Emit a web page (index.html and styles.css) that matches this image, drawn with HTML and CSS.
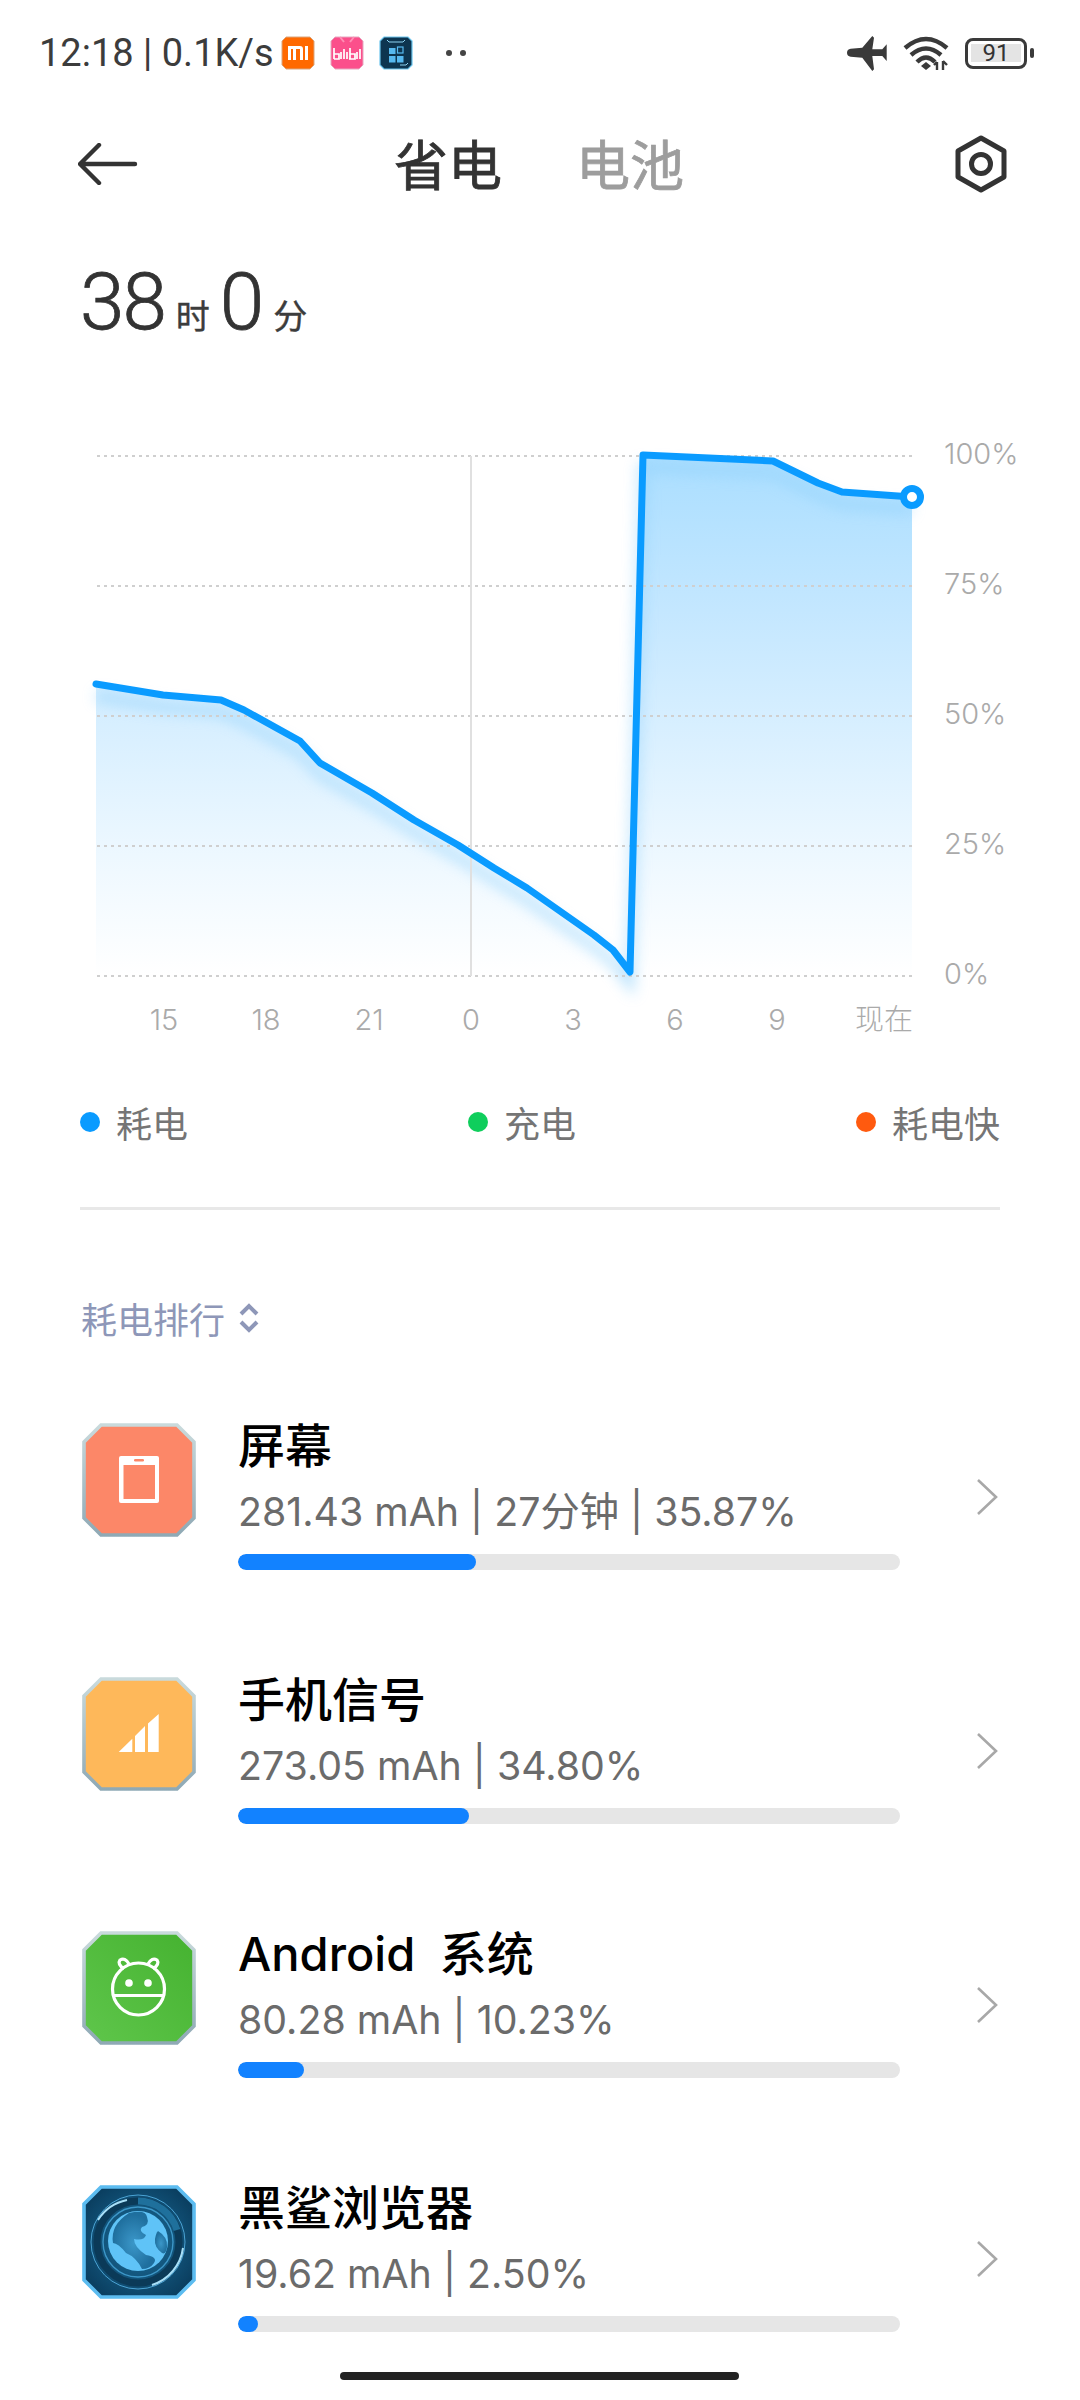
FILE: index.html
```html
<!DOCTYPE html>
<html lang="zh-CN">
<head>
    <meta charset="UTF-8">
    <meta name="viewport" content="width=device-width, initial-scale=1.0">
    <title>省电</title>
    <link rel="stylesheet" href="styles.css">
</head>
<body>
    <div class="screen">
        <div class="status-bar">
            <span class="status-text">12:18 | 0.1K/s</span>
            <svg class="note-icon" width="34" height="34" viewBox="0 0 34 34">
                <path d="M5 1H29L33 5V29L29 33H5L1 29V5Z" fill="#ff6900" stroke="#d9a67e" stroke-width="1"/>
                <path d="M7 10H19Q22 10 22 13V24H19V13H15V24H12V13H10V24H7ZM24 10H27V24H24Z" fill="#fff"/>
            </svg>
            <svg class="note-icon" width="34" height="34" viewBox="0 0 34 34">
                <path d="M5 1H29L33 5V29L29 33H5L1 29V5Z" fill="#fb4f8b" stroke="#e6a8c0" stroke-width="1"/>
                <path d="M10 1L14 6M24 1L20 6" stroke="#ff8db4" stroke-width="2"/>
                <path d="M4 12V23M4 23H9V18H4M11 16V23M14 13V23M17 16V23M19 23H25V18H20M20 12V23M27 16V23M30 13V23" stroke="#fff" stroke-width="1.7" fill="none"/>
            </svg>
            <svg class="note-icon" width="34" height="34" viewBox="0 0 34 34">
                <path d="M5 1H29L33 5V29L29 33H5L1 29V5Z" fill="#0d3550" stroke="#6cc6ee" stroke-width="1.2"/>
                <path d="M8 4L10 6H24L26 4M21 29H27L29 27" stroke="#8ed4f2" stroke-width="1" fill="none"/>
                <rect x="10" y="12" width="6.5" height="6" fill="#56b9f0"/>
                <rect x="18.5" y="11" width="5.5" height="6" fill="none" stroke="#56b9f0" stroke-width="1.2"/>
                <rect x="10" y="20" width="6.5" height="6.5" fill="#56b9f0"/>
                <rect x="18" y="20" width="6.5" height="6.5" fill="#56b9f0"/>
            </svg>
            <span class="status-dots"><i></i><i></i></span>
            <span class="status-spacer"></span>
            <svg class="plane" width="40" height="35" viewBox="0 0 40 35">
                <path d="M15.3 11.7L25.3 0L27 1.7L25.3 13.3H35.3L39.7 8.3V25L35.3 20H25.3L27 33.3L25.3 35L15.3 21.7L3.7 20.7Q0 20 0 16.7Q0 13.4 3.7 12.7Z" fill="#3a3a3a"/>
            </svg>
            <svg class="wifi" width="46" height="36" viewBox="0 0 46 36">
                <path d="M2 13Q23 -5 44 13" stroke="#3a3a3a" stroke-width="4.4" fill="none"/>
                <path d="M8 20Q23 7 38 20" stroke="#3a3a3a" stroke-width="4.4" fill="none"/>
                <path d="M14 27Q23 18 32 27" stroke="#3a3a3a" stroke-width="4.4" fill="none"/>
                <path d="M18 31L23 27L28 31L23 35Z" fill="#3a3a3a"/>
                <path d="M34 27V35M31 30L34 27M40 35V26M40 26L44 30" stroke="#3a3a3a" stroke-width="2.4" fill="none"/>
            </svg>
            <span class="battery"><span class="battery-level">91</span></span>
            <span class="battery-nub"></span>
        </div>

        <div class="nav-bar">
            <svg class="back-icon" width="60" height="42" viewBox="0 0 60 42">
                <path d="M57 21H3M21 2L2 21L21 40" stroke="#333" stroke-width="4.4" stroke-linecap="round" stroke-linejoin="round" fill="none"/>
            </svg>
            <div class="nav-tabs">
                <span class="nav-tab active">省电</span>
                <span class="nav-tab">电池</span>
            </div>
            <svg class="settings-icon" width="52" height="58" viewBox="0 0 52 58">
                <path d="M26 3L49 16V42L26 55L3 42V16Z" stroke="#333" stroke-width="5" stroke-linejoin="round" fill="none"/>
                <circle cx="26" cy="29" r="9.5" stroke="#333" stroke-width="5" fill="none"/>
            </svg>
        </div>

        <div class="summary">
            <span class="summary-num">38</span><span class="summary-unit">时</span><span class="summary-num">0</span><span class="summary-unit">分</span>
        </div>

        <svg class="chart" width="1080" height="640" viewBox="0 420 1080 640">
            <defs>
                <linearGradient id="areaFill" gradientUnits="userSpaceOnUse" x1="0" y1="455" x2="0" y2="976">
                    <stop offset="0" stop-color="#aadeff"/>
                    <stop offset="0.3" stop-color="#c4e7ff"/>
                    <stop offset="0.55" stop-color="#daf0ff"/>
                    <stop offset="0.8" stop-color="#f0f9ff"/>
                    <stop offset="1" stop-color="#ffffff"/>
                </linearGradient>
                <filter id="lineBlur" x="-10%" y="-10%" width="120%" height="120%">
                    <feGaussianBlur stdDeviation="7"/>
                </filter>
            </defs>
            <polygon fill="url(#areaFill)" points="96,684 163,695 221,700 244,710 300,741 320,763 372,793 414,820 458,845 494,868 527,888 594,935 613,950 630,972 631,976 96,976"/>
            <polygon fill="url(#areaFill)" points="643,455 773,461 818,483 842,492 912,497 912,976 630,976"/>
            <polyline class="line-shadow" filter="url(#lineBlur)" points="96,696 163,707 221,712 244,722 300,753 320,775 372,805 414,832 458,857 494,880 527,900 594,947 613,962 630,984 643,467 773,473 818,495 842,504 912,509"/>
            <g class="grid-lines">
                <line x1="97" y1="456" x2="913" y2="456"/>
                <line x1="97" y1="586" x2="913" y2="586"/>
                <line x1="97" y1="716" x2="913" y2="716"/>
                <line x1="97" y1="846" x2="913" y2="846"/>
                <line x1="97" y1="976" x2="913" y2="976"/>
            </g>
            <line class="now-line" x1="471" y1="456" x2="471" y2="976"/>
            <polyline class="power-line" points="96,684 163,695 221,700 244,710 300,741 320,763 372,793 414,820 458,845 494,868 527,888 594,935 613,950 630,972 643,455 773,461 818,483 842,492 912,497"/>
            <circle class="power-end" cx="912" cy="497" r="8.5"/>
            <g class="axis-y">
                <text x="944" y="464">100%</text>
                <text x="944" y="594">75%</text>
                <text x="944" y="724">50%</text>
                <text x="944" y="854">25%</text>
                <text x="944" y="984">0%</text>
            </g>
            <g class="axis-x">
                <text x="164" y="1030">15</text>
                <text x="266" y="1030">18</text>
                <text x="369" y="1030">21</text>
                <text x="471" y="1030">0</text>
                <text x="573" y="1030">3</text>
                <text x="675" y="1030">6</text>
                <text x="777" y="1030">9</text>
                <text x="884" y="1030">现在</text>
            </g>
        </svg>

        <div class="legend">
            <div class="legend-item"><span class="legend-dot dot-blue"></span>耗电</div>
            <div class="legend-item"><span class="legend-dot dot-green"></span>充电</div>
            <div class="legend-item"><span class="legend-dot dot-orange"></span>耗电快</div>
        </div>

        <div class="section-title">
            耗电排行
            <svg width="22" height="32" viewBox="0 0 22 32">
                <path d="M3 12L11 4L19 12M3 20L11 28L19 20" stroke="#8e97b8" stroke-width="4" fill="none"/>
            </svg>
        </div>

        <div class="rank-row">
            <svg class="rank-icon" width="114" height="114" viewBox="0 0 114 114">
                <defs>
                    <linearGradient id="rim" x1="0" y1="0" x2="0" y2="1">
                        <stop offset="0" stop-color="#c9dadc"/>
                        <stop offset="1" stop-color="#8fa9b5"/>
                    </linearGradient>
                    <linearGradient id="green" x1="1" y1="0" x2="0" y2="1">
                        <stop offset="0" stop-color="#45b230"/>
                        <stop offset="1" stop-color="#5fc64b"/>
                    </linearGradient>
                    <radialGradient id="deep" cx="0.5" cy="0.5" r="0.6">
                        <stop offset="0" stop-color="#1c709e"/>
                        <stop offset="1" stop-color="#0a3d5e"/>
                    </radialGradient>
                    <radialGradient id="sea" cx="0.5" cy="0.55" r="0.5">
                        <stop offset="0" stop-color="#3b97c9"/>
                        <stop offset="1" stop-color="#1f6f9e"/>
                    </radialGradient>
                </defs>
                <path d="M19 2H95L112 19V95L95 112H19L2 95V19Z" fill="#fc8768" stroke="url(#rim)" stroke-width="3.6"/>
                <rect x="37" y="33" width="40" height="47" rx="2" fill="#fff"/>
                <rect x="41.5" y="42" width="31.5" height="34" fill="#fc8768"/>
                <rect x="52" y="36" width="10" height="2.6" rx="1.3" fill="#fc8768"/>
            </svg>
            <div class="rank-body">
                <div class="rank-name">屏幕</div>
                <div class="rank-detail">281.43 mAh | 27分钟 | 35.87%</div>
                <div class="bar"><div class="bar-fill" style="width: 238px"></div></div>
            </div>
            <svg class="chevron" width="24" height="38" viewBox="0 0 24 38">
                <path d="M3 2L21 19L3 36" stroke="#a8a8a8" stroke-width="2.6" fill="none"/>
            </svg>
        </div>

        <div class="rank-row">
            <svg class="rank-icon" width="114" height="114" viewBox="0 0 114 114">
                <path d="M19 2H95L112 19V95L95 112H19L2 95V19Z" fill="#feb85a" stroke="url(#rim)" stroke-width="3.6"/>
                <path d="M36.7 75L50.3 61.7V75ZM53 59L63 49V75H53ZM66 46.5L76.7 37V75H66Z" fill="#fff"/>
            </svg>
            <div class="rank-body">
                <div class="rank-name">手机信号</div>
                <div class="rank-detail">273.05 mAh | 34.80%</div>
                <div class="bar"><div class="bar-fill" style="width: 231px"></div></div>
            </div>
            <svg class="chevron" width="24" height="38" viewBox="0 0 24 38">
                <path d="M3 2L21 19L3 36" stroke="#a8a8a8" stroke-width="2.6" fill="none"/>
            </svg>
        </div>

        <div class="rank-row">
            <svg class="rank-icon" width="114" height="114" viewBox="0 0 114 114">
                <path d="M19 2H95L112 19V95L95 112H19L2 95V19Z" fill="url(#green)" stroke="url(#rim)" stroke-width="3.6"/>
                <ellipse cx="56.5" cy="58" rx="26" ry="26" fill="none" stroke="#fff" stroke-width="3.2"/>
                <path d="M31 64.5H82" stroke="#fff" stroke-width="3.2"/>
                <circle cx="47" cy="52" r="3.8" fill="#fff"/>
                <circle cx="66" cy="52" r="3.8" fill="#fff"/>
                <path d="M42 38Q35 33 38 29Q43 26 47 33M71 38Q78 33 75 29Q70 26 66 33" fill="none" stroke="#fff" stroke-width="3.2"/>
            </svg>
            <div class="rank-body">
                <div class="rank-name">Android 系统</div>
                <div class="rank-detail">80.28 mAh | 10.23%</div>
                <div class="bar"><div class="bar-fill" style="width: 66px"></div></div>
            </div>
            <svg class="chevron" width="24" height="38" viewBox="0 0 24 38">
                <path d="M3 2L21 19L3 36" stroke="#a8a8a8" stroke-width="2.6" fill="none"/>
            </svg>
        </div>

        <div class="rank-row">
            <svg class="rank-icon" width="114" height="114" viewBox="0 0 114 114">
                <path d="M19 2H95L112 19V95L95 112H19L2 95V19Z" fill="url(#deep)" stroke="#5cbcf0" stroke-width="3.6"/>
                <circle cx="56" cy="57" r="47" fill="none" stroke="#4ba3d4" stroke-width="1"/>
                <circle cx="56" cy="57" r="41" fill="none" stroke="#0b3a58" stroke-width="7"/>
                <path d="M56 16A41 41 0 0 1 95 45" fill="none" stroke="#1f709c" stroke-width="7"/>
                <path d="M16 35A45 45 0 0 1 45 15" fill="none" stroke="#a8dff7" stroke-width="2"/>
                <path d="M70 100A45 45 0 0 0 101 63" fill="none" stroke="#a8dff7" stroke-width="2"/>
                <circle cx="56" cy="57" r="35" fill="none" stroke="#3d97c8" stroke-width="1.4"/>
                <circle cx="56" cy="56" r="30" fill="#5fc3f7"/>
                <path d="M47 28Q64 24 65 32Q68 40 60 42Q56 46 64 50Q62 56 52 54Q52 62 64 70Q76 72 72 78Q68 84 60 84Q54 72 44 68Q36 58 31 58Q28 40 47 28Z" fill="url(#sea)"/>
                <path d="M76 46Q86 52 85 62Q84 70 80 68Q72 62 73 54Q74 48 76 46Z" fill="url(#sea)"/>
            </svg>
            <div class="rank-body">
                <div class="rank-name">黑鲨浏览器</div>
                <div class="rank-detail">19.62 mAh | 2.50%</div>
                <div class="bar"><div class="bar-fill" style="width: 20px"></div></div>
            </div>
            <svg class="chevron" width="24" height="38" viewBox="0 0 24 38">
                <path d="M3 2L21 19L3 36" stroke="#a8a8a8" stroke-width="2.6" fill="none"/>
            </svg>
        </div>

        <div class="home-indicator"></div>
    </div>
</body>
</html>
```

FILE: styles.css
```css
* {
    box-sizing: border-box;
}

html,
body {
    margin: 0;
    padding: 0;
    background: #fff;
}

body {
    font-family: Inter, "Noto Sans CJK SC", sans-serif;
    color: #333;
}

.screen {
    position: relative;
    width: 1080px;
    height: 2400px;
    overflow: hidden;
    background: #fff;
}

/* status bar */
.status-bar {
    display: flex;
    align-items: center;
    height: 106px;
    padding: 0 46px 0 39px;
}

.status-text {
    font-family: Roboto, "Noto Sans CJK SC", sans-serif;
    font-size: 38px;
    color: #3c3c3c;
    white-space: nowrap;
    width: 242px;
}

.note-icon {
    margin-right: 15px;
}

.status-dots {
    display: flex;
    gap: 8px;
    margin-left: 18px;
}

.status-dots i {
    width: 6px;
    height: 6px;
    border-radius: 50%;
    background: #444;
}

.status-spacer {
    flex: 1;
}

.plane {
    margin-right: 16px;
}

.wifi {
    margin-right: 16px;
}

.battery {
    display: flex;
    align-items: center;
    justify-content: center;
    width: 62px;
    height: 31px;
    border: 3.5px solid #3a3a3a;
    border-radius: 8px;
    padding: 0 3px;
}

.battery-level {
    width: 100%;
    height: 18px;
    background: #e4e4e4;
    font-family: Roboto, sans-serif;
    font-size: 24px;
    line-height: 18px;
    text-align: center;
    color: #333;
}

.battery-nub {
    width: 4px;
    height: 10px;
    margin-left: 3px;
    background: #3a3a3a;
    border-radius: 2px;
}

/* title bar */
.nav-bar {
    display: flex;
    align-items: center;
    height: 116px;
    padding-left: 78px;
}

.back-icon {
    margin-right: 256px;
}

.nav-tabs {
    display: flex;
    gap: 74px;
    width: 395px;
    margin-top: -3px;
}

.nav-tab {
    font-size: 54px;
    font-weight: 400;
    -webkit-text-stroke: 0.8px #9d9d9d;
    color: #9d9d9d;
}

.nav-tab.active {
    -webkit-text-stroke: 0.8px #333;
    color: #333;
}

.settings-icon {
    margin-left: 166px;
}

/* 38 hours */
.summary {
    display: flex;
    align-items: baseline;
    height: 198px;
    padding: 32px 0 0 80px;
    font-family: Roboto, "Noto Sans CJK SC", sans-serif;
}

.summary-num {
    font-size: 80px;
    font-weight: 300;
    -webkit-text-stroke: 0.8px #333;
    line-height: 96px;
    letter-spacing: -2px;
    color: #333;
}

.summary-unit {
    font-size: 34px;
    font-weight: 400;
    -webkit-text-stroke: 0.4px #3c3c3c;
    margin: 0 10px 0 11px;
    color: #3c3c3c;
}

/* chart */
.chart {
    display: block;
}

.grid-lines line {
    stroke: #cfcfcf;
    stroke-width: 2;
    stroke-dasharray: 3 4;
}

.now-line {
    stroke: #e0e0e0;
    stroke-width: 2;
}

.power-line {
    fill: none;
    stroke: #0a9bff;
    stroke-width: 7;
    stroke-linejoin: round;
    stroke-linecap: round;
}

.line-shadow {
    fill: none;
    stroke: #8fd0fb;
    stroke-width: 9;
    opacity: 0.6;
}

.power-end {
    fill: #fff;
    stroke: #0a9bff;
    stroke-width: 7;
}

.axis-y text,
.axis-x text {
    font-size: 29px;
    font-weight: 300;
    fill: #aaa;
}

.axis-x text {
    text-anchor: middle;
}

/* legend */
.legend {
    display: flex;
    height: 150px;
    padding-top: 37px;
    margin: 0 80px;
    border-bottom: 3px solid #e8e8e8;
}

.legend-item {
    display: flex;
    align-items: center;
    height: 50px;
    width: 388px;
    font-size: 36px;
    color: #757575;
}

.legend-item:last-child {
    width: auto;
}

.legend-dot {
    width: 20px;
    height: 20px;
    border-radius: 50%;
    margin-right: 16px;
}

.dot-blue {
    background: #0a9bff;
}

.dot-green {
    background: #0fce5c;
}

.dot-orange {
    background: #ff5a0f;
}

/* list */
.section-title {
    display: flex;
    align-items: center;
    gap: 13px;
    height: 50px;
    margin: 83px 0 73px 81px;
    font-size: 36px;
    color: #8e97b8;
}

.rank-row {
    display: flex;
    align-items: flex-start;
    height: 254px;
    padding-left: 82px;
}

.rank-icon {
    margin-top: 7px;
    margin-right: 42px;
    flex-shrink: 0;
}

.rank-body {
    width: 662px;
}

.rank-name {
    font-size: 47px;
    font-weight: 500;
    line-height: 60px;
    word-spacing: 12px;
    color: #000;
}

.rank-detail {
    margin-top: 8px;
    font-size: 39.3px;
    line-height: 56px;
    color: #6b6b6b;
}

.bar {
    height: 16px;
    margin-top: 14px;
    border-radius: 8px;
    background: #e6e6e6;
    overflow: hidden;
}

.bar-fill {
    height: 100%;
    border-radius: 8px;
    background: #1282ff;
}

.chevron {
    margin-top: 62px;
    margin-left: 75px;
}

.home-indicator {
    position: absolute;
    left: 340px;
    bottom: 20px;
    width: 399px;
    height: 8px;
    border-radius: 4px;
    background: #222;
}
```
